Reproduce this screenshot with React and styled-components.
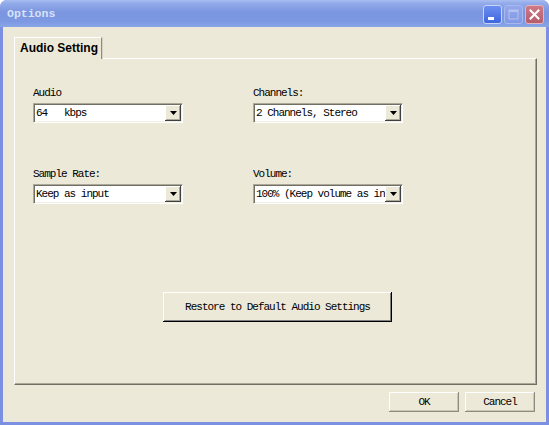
import React from 'react'
import styled, { createGlobalStyle } from 'styled-components'

const GlobalStyle = createGlobalStyle`
  html, body {
    margin: 0;
    padding: 0;
    background: #ffffff;
  }
  * {
    box-sizing: border-box;
  }
`

const mono = `"Liberation Mono", "DejaVu Sans Mono", monospace`

const Window = styled.div`
  width: 549px;
  height: 425px;
  display: flex;
  flex-direction: column;
  background: #7b90e2;
  border-radius: 7px 7px 0 0;
  overflow: hidden;
`

const TitleBar = styled.div`
  height: 27px;
  flex-shrink: 0;
  display: flex;
  align-items: center;
  padding: 0 5px 0 7px;
  background: linear-gradient(180deg, #a9bdf0 0%, #93abea 12%, #7b95e0 45%, #7d99e2 80%, #89a6e8 100%);
`

const Caption = styled.div`
  flex: 1;
  font-family: ${mono};
  font-weight: bold;
  font-size: 11.5px;
  color: #d8e2f7;
`

const Controls = styled.div`
  display: flex;
  gap: 2px;
  margin-top: 1px;
`

const CtlButton = styled.div`
  width: 19px;
  height: 19px;
  border-radius: 3px;
  border: 1px solid ${p => p.kind === 'close' ? '#e2b4bd' : p.kind === 'max' ? '#a7b8ee' : '#c7d4f6'};
  background: ${p => {
    if (p.kind === 'close') return 'linear-gradient(180deg, #cd7a88, #b65c6d)'
    if (p.kind === 'max') return 'linear-gradient(180deg, #94a8ea, #8299e4)'
    return 'linear-gradient(180deg, #6b8ff0, #3f66dd)'
  }};
  display: flex;
  align-items: center;
  justify-content: center;
`

const Body = styled.div`
  flex: 1;
  margin: 0 3px 3px 3px;
  background: #ece9d8;
  display: flex;
  flex-direction: column;
`

const TabStrip = styled.div`
  display: flex;
  padding: 10px 0 0 11px;
`

const Tab = styled.div`
  width: 88px;
  height: 22px;
  margin-bottom: -1px;
  position: relative;
  z-index: 1;
  background: #ece9d8;
  border-top: 1px solid #ffffff;
  border-left: 1px solid #ffffff;
  border-right: 1px solid #8e8c80;
  box-shadow: 1px 0 0 #d6d3c2;
  font-family: "Liberation Sans", Arial, sans-serif;
  font-weight: bold;
  font-size: 12px;
  line-height: 16px;
  white-space: nowrap;
  color: #000;
  padding: 2px 0 0 5px;
`

const Panel = styled.div`
  height: 327px;
  margin: 0 9px 0 11px;
  border-top: 1px solid #ffffff;
  border-left: 1px solid #ffffff;
  border-right: 1px solid #716f64;
  border-bottom: 1px solid #716f64;
  box-shadow: inset -1px -1px 0 #aca899;
  padding: 28px 0 0 18px;
  display: flex;
  flex-direction: column;
`

const FieldGrid = styled.div`
  display: grid;
  grid-template-columns: 220px 150px;
  row-gap: 45px;
`

const Field = styled.div`
  display: flex;
  flex-direction: column;
`

const Label = styled.div`
  font-family: ${mono};
  font-size: 11px;
  letter-spacing: -1px;
  line-height: 12px;
  height: 12px;
  color: #000;
  margin-bottom: 4px;
  white-space: pre;
`

const Combo = styled.div`
  width: 150px;
  height: 20px;
  background: #ffffff;
  border: 1px solid;
  border-color: #aca899 #ffffff #ffffff #aca899;
  box-shadow: inset 1px 1px 0 #716f64, inset -1px -1px 0 #f1efe2;
  padding: 1px 1px 1px 2px;
  display: flex;
  align-items: center;
`

const ComboText = styled.div`
  flex: 1;
  overflow: hidden;
  white-space: pre;
  font-family: ${mono};
  font-size: 11px;
  letter-spacing: -1px;
  color: #000;
  line-height: 16px;
`

const ArrowButton = styled.div`
  width: 16px;
  height: 16px;
  flex-shrink: 0;
  background: #ece9d8;
  box-shadow: inset -1px -1px 0 #404040, inset 1px 1px 0 #ffffff, inset -2px -2px 0 #aca899;
  display: flex;
  align-items: center;
  justify-content: center;
`

const RestoreRow = styled.div`
  display: flex;
  padding: 88px 0 0 130px;
`

const PushButton = styled.div`
  width: ${p => p.w}px;
  height: ${p => p.h}px;
  background: #ece9d8;
  display: flex;
  align-items: center;
  justify-content: center;
  font-family: ${mono};
  font-size: 11px;
  letter-spacing: -1px;
  color: #000;
  box-shadow: ${p => p.strong
    ? 'inset -1px -1px 0 #000000, inset 1px 1px 0 #ffffff, inset -2px -2px 0 #808080'
    : 'inset -1px -1px 0 #8e8c80, inset 1px 1px 0 #ffffff, inset -2px -2px 0 #c9c6b4'};
  white-space: pre;
`

const Footer = styled.div`
  display: flex;
  justify-content: flex-end;
  gap: 6px;
  padding: 7px 11px 0 0;
`

const Arrow = () => (
  <svg width='7' height='4' viewBox='0 0 7 4'>
    <polygon points='0,0 7,0 3.5,4' fill='#000' />
  </svg>
)

const Select = ({ value }) => (
  <Combo>
    <ComboText>{value}</ComboText>
    <ArrowButton><Arrow /></ArrowButton>
  </Combo>
)

const fields = [
  { label: 'Audio', value: '64   kbps' },
  { label: 'Channels:', value: '2 Channels, Stereo' },
  { label: 'Sample Rate:', value: 'Keep as input' },
  { label: 'Volume:', value: '100% (Keep volume as in' }
]

export default function App () {
  return (
    <>
      <GlobalStyle />
      <Window>
        <TitleBar>
          <Caption>Options</Caption>
          <Controls>
            <CtlButton kind='min'>
              <svg width='17' height='17' viewBox='0 0 17 17'>
                <rect x='4' y='11' width='6' height='3' fill='#fff' />
              </svg>
            </CtlButton>
            <CtlButton kind='max'>
              <svg width='17' height='17' viewBox='0 0 17 17'>
                <rect x='4' y='4' width='9' height='9' fill='none' stroke='#b3c2f0' strokeWidth='1' />
                <rect x='4' y='4' width='9' height='2' fill='#b3c2f0' />
              </svg>
            </CtlButton>
            <CtlButton kind='close'>
              <svg width='17' height='17' viewBox='0 0 17 17'>
                <path d='M4.5 4.5 L12.5 12.5 M12.5 4.5 L4.5 12.5' stroke='#fff' strokeWidth='2' strokeLinecap='square' />
              </svg>
            </CtlButton>
          </Controls>
        </TitleBar>
        <Body>
          <TabStrip>
            <Tab>Audio Setting</Tab>
          </TabStrip>
          <Panel>
            <FieldGrid>
              {fields.map(f => (
                <Field key={f.label}>
                  <Label>{f.label}</Label>
                  <Select value={f.value} />
                </Field>
              ))}
            </FieldGrid>
            <RestoreRow>
              <PushButton strong w={229} h={30}>Restore to Default Audio Settings</PushButton>
            </RestoreRow>
          </Panel>
          <Footer>
            <PushButton w={70} h={20}>OK</PushButton>
            <PushButton w={70} h={20}>Cancel</PushButton>
          </Footer>
        </Body>
      </Window>
    </>
  )
}
